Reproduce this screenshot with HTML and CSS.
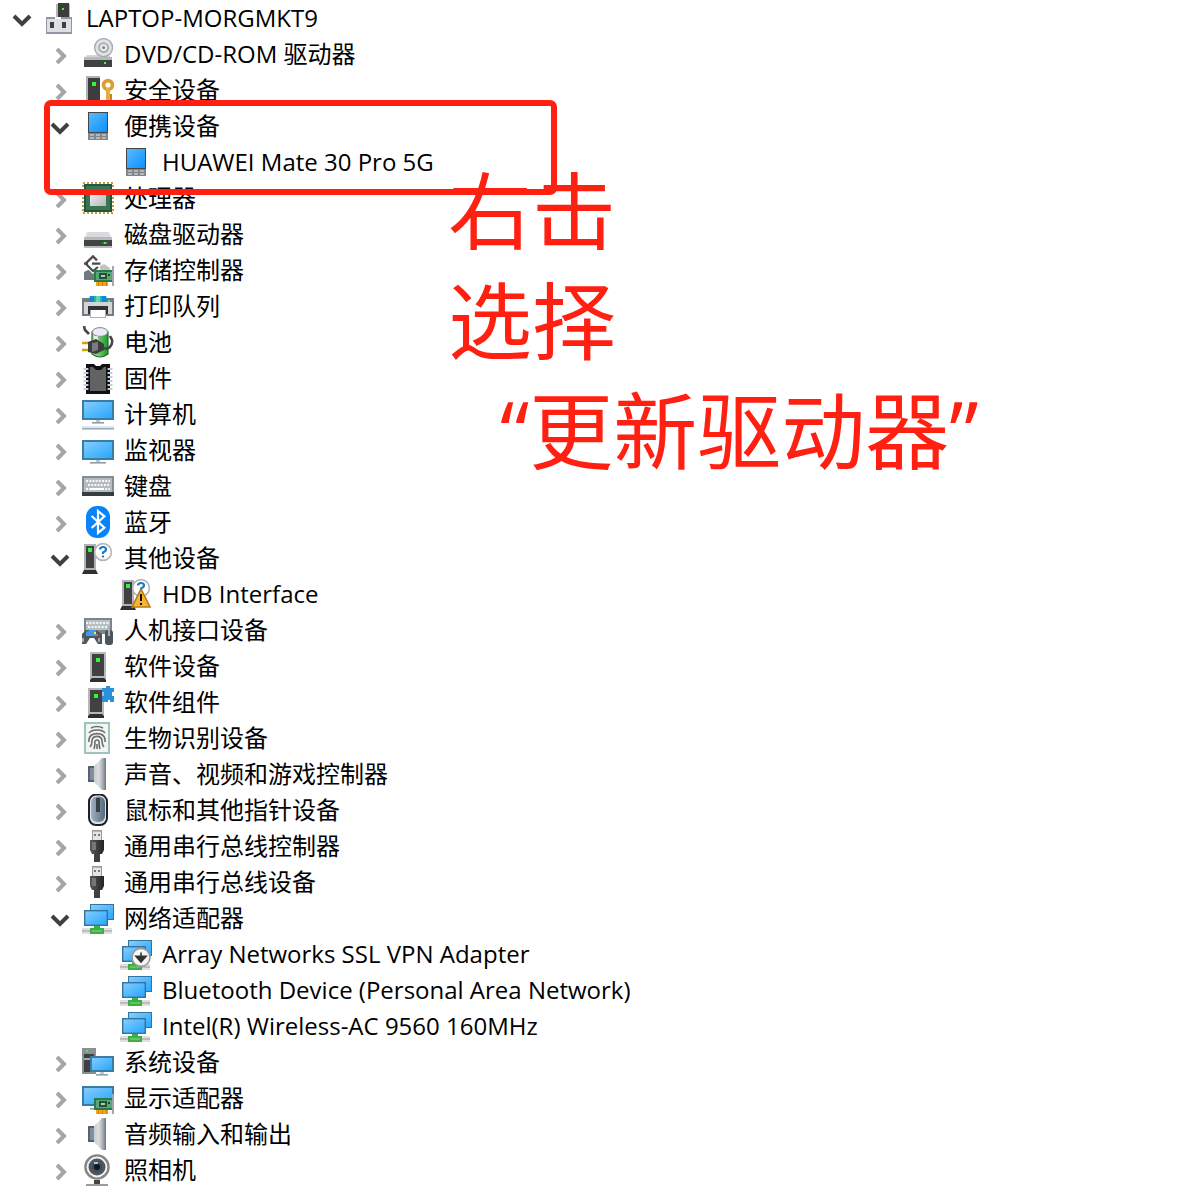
FILE: index.html
```html
<!DOCTYPE html>
<html lang="zh-CN">
<head>
<meta charset="utf-8">
<meta name="viewport" content="width=device-width, initial-scale=1">
<title>设备管理器</title>
<link rel="stylesheet" href="styles.css">
</head>
<body>
<svg class="defs" aria-hidden="true">
  <defs>
    <linearGradient id="screen" x1="0" y1="0" x2="1" y2="1"><stop offset="0" stop-color="#86ccfd"/><stop offset=".5" stop-color="#55bafd"/><stop offset="1" stop-color="#2aa6fb"/></linearGradient>
    <linearGradient id="phone" x1="0" y1="0" x2="1" y2="1"><stop offset="0" stop-color="#5bb9ff"/><stop offset="1" stop-color="#0b91fb"/></linearGradient>
    <linearGradient id="silver" x1="0" y1="0" x2="1" y2="1"><stop offset="0" stop-color="#f4f4f4"/><stop offset="1" stop-color="#b4b7ba"/></linearGradient>
    <linearGradient id="steel" x1="0" y1="0" x2="1" y2="0"><stop offset="0" stop-color="#9fb1c4"/><stop offset="1" stop-color="#57697c"/></linearGradient>
    <linearGradient id="cone" x1="0" y1="0" x2="1" y2="0"><stop offset="0" stop-color="#c9cdd0"/><stop offset=".4" stop-color="#dcdfe1"/><stop offset=".75" stop-color="#a4aab0"/><stop offset="1" stop-color="#69737e"/></linearGradient>
    <linearGradient id="dark" x1="0" y1="0" x2="1" y2="0"><stop offset="0" stop-color="#5a5a5a"/><stop offset="1" stop-color="#242424"/></linearGradient>
    <linearGradient id="green" x1="0" y1="0" x2="1" y2="0"><stop offset="0" stop-color="#b0eaa4"/><stop offset="1" stop-color="#189b25"/></linearGradient>
  </defs>
  <symbol id="right" viewBox="0 0 28 20"><path d="M11 3l7 7-7 7" fill="none" stroke="#a6a6a6" stroke-width="4"/></symbol>
  <symbol id="down" viewBox="0 0 28 20"><path d="M6 6l8 8 8-8" fill="none" stroke="#404040" stroke-width="4"/></symbol>

  <symbol id="root" viewBox="0 0 16 16">
    <path d="M6 1h7v7H6z" fill="#b4b6b9"/><path d="M7 .5h5.500V8H7z" fill="#3c3c3c"/><path d="M9 3h1v1H9z" fill="#2cff38"/>
    <path d="M1 7.500h13V16H1z" fill="#9197a2"/><path d="M1.500 8.500h12v6.500h-12z" fill="#dcdfe4"/><path d="M5.500 7.500h3v1h-3z" fill="#fff"/><path d="M3 10h2v3H3zM9 10h2v3H9z" fill="#3d3d42"/>
  </symbol>
  <symbol id="disc" viewBox="0 0 16 16">
    <path d="M2.500 8.500h11L15 11H1z" fill="#d3d5d8"/><circle cx="10.800" cy="4.800" r="4.500" fill="#dfe1e3" stroke="#a8acb1" stroke-width=".7"/><circle cx="10.800" cy="4.800" r="2.200" fill="#f1f1f1" stroke="#aaafb4"/><circle cx="10.800" cy="4.800" r=".8" fill="#84898e"/>
    <path d="M1 9.500h14v5H1z" fill="#b6b9bc"/><path d="M1 11h14v3.500H1z" fill="#414141"/><path d="M11 12h1v1h-1z" fill="#32ff3d"/>
  </symbol>
  <symbol id="key" viewBox="0 0 16 16">
    <path d="M2 1h7v13H2z" fill="#afb2b6"/><path d="M3 2h6v12H3z" fill="#3d3d3d"/><path d="M5 4h2v2H5z" fill="#2bfa35"/><path d="M2 14h8v2H2z" fill="#555"/>
    <circle cx="13" cy="5.500" r="2.200" fill="none" stroke="#dc9d30" stroke-width="1.800"/><path d="M12 7h2v8h-2z" fill="#e5ad40"/><path d="M14 10h1v3h-1z" fill="#c58622"/>
  </symbol>
  <symbol id="portable" viewBox="0 0 16 16">
    <path d="M3 1h10v14H3z" fill="#41464b"/><path d="M3.500 1.500h9V11h-9z" fill="url(#phone)"/><path d="M3 11.500h10V15H3z" fill="#81868b"/><path d="M4 12h2v1H4zM7 12h2v1H7zM10 12h2v1h-2zM4 13.500h2v1H4zM7 13.500h2v1H7zM10 13.500h2v1h-2z" fill="#b4b7ba"/>
  </symbol>
  <symbol id="cpu" viewBox="0 0 16 16">
    <rect x=".5" y=".5" width="15" height="15" fill="none" stroke="#c39c42" stroke-dasharray="1 1"/><path d="M1 1h14v14H1z" fill="#24563e"/><path d="M2 2h12v12H2z" fill="#357653"/><path d="M4 4h8v8H4z" fill="url(#silver)"/>
  </symbol>
  <symbol id="drive" viewBox="0 0 16 16">
    <path d="M2.500 7h11L15 11H1z" fill="#d8dadd"/><path d="M1 9.500h14V15H1z" fill="#b7babd"/><path d="M1 11h14v3H1z" fill="#404443"/><path d="M10 12h3v1h-3z" fill="#22892c"/><path d="M11 12h1v1h-1z" fill="#35ff40"/>
  </symbol>
  <symbol id="card" viewBox="0 0 16 16">
    <path d="M6 8h9v6H6z" fill="#287a49"/><path d="M7 9h8v4H7z" fill="#58a878"/><path d="M8.500 9.500h4v3h-4z" fill="#24513b"/><path d="M9.500 10.500h2v1h-2z" fill="#b9c6be"/><path d="M13 10h1v1h-1z" fill="#1e4b30"/><path d="M7 14h6v2H7z" fill="#f5a60b"/><path d="M8 14h.5v2H8zM10 14h.5v2H10zM12 14h.5v2H12z" fill="#d67f06"/><path d="M15 6h1v10h-1z" fill="#a4a7aa"/>
  </symbol>
  <symbol id="storage" viewBox="0 0 16 16">
    <path d="M1 9l2-1h5v5H1z" fill="#74797c"/><path d="M9 6l2-1 3 2v2H9z" fill="#c1c4c7"/>
    <path d="M7.500 3.200L5.500 1.200 1.800 4.800l3.700 3.700 2.500-2M5 4.800h4.200M1 4.800h2" fill="none" stroke="#fff" stroke-width="2.200"/><path d="M7.500 3.200L5.500 1.200 1.800 4.800l3.700 3.700 2.500-2M5 4.800h4.200M1 4.800h2" fill="none" stroke="#4b4b4b" stroke-width="1.100"/><use href="#card"/>
  </symbol>
  <symbol id="printer" viewBox="0 0 16 16">
    <path d="M3 4h10v4H3z" fill="#777c80"/><path d="M4 3h8l1 3H3z" fill="#1385db"/><path d="M6 3h4v3H6z" fill="#20b995"/><path d="M7 3h2v3H7z" fill="#62d6b4"/>
    <path d="M0 4h3l1 2h8l1-2h3v9H0z" fill="#747b82"/><path d="M1 6h14v6H1z" fill="#d2d5d8"/><path d="M13 5h1v1h-1z" fill="#40ef36"/><path d="M3 8h10v4H3z" fill="#333"/><path d="M4 10h8v4H4z" fill="#aeb0b1"/><path d="M4.500 10h7v3.500h-7z" fill="#fff"/>
  </symbol>
  <symbol id="battery" viewBox="0 0 16 16">
    <path d="M5 3q4-4 8 0v11q-4 3-8 0z" fill="url(#green)" stroke="#276a2c" stroke-width=".6"/><ellipse cx="9" cy="3" rx="3.800" ry="2.200" fill="#eceaf5" stroke="#8b8a9c" stroke-width=".5"/><path d="M6 5h2v5H6z" fill="#fff" opacity=".7"/>
    <path d="M0 8.500h4M0 12h4" stroke="#cfa10b" stroke-width="1.200"/><path d="M1 0l.5 2 2 2M11 11c2 1 4.500-1 4-4l-1-2" fill="none" stroke="#464646" stroke-width="1.300"/><path d="M3 8l4-1.500L11 9v3l-4 2-4-1z" fill="#3d3d3d"/><path d="M5 8.500l3-.5v4l-3 1z" fill="#7b7b7b"/>
  </symbol>
  <symbol id="chip" viewBox="0 0 16 16">
    <path d="M2 1h4l1 1h2l1-1h4v15H2z" fill="#111"/><path d="M4 2.500h1.500L7 4h2.500L11 2.500h1V14.500H4z" fill="#626262"/><path d="M2 3v12M14 3v12" stroke="#c3cddd" stroke-width="2.400" stroke-dasharray="1 1"/>
  </symbol>
  <symbol id="computer" viewBox="0 0 16 16">
    <path d="M0 1h16v10H0z" fill="#397ca4"/><path d="M1 2h14v8H1z" fill="url(#screen)"/><path d="M7 11h2v1H7z" fill="#b7c7d4"/><path d="M5 12h6v.8H5z" fill="#8c9dac"/><path d="M0 14h16v1H0z" fill="#dfe6ed"/><path d="M0 15h16v.8H0z" fill="#9daabd"/>
  </symbol>
  <symbol id="monitor" viewBox="0 0 16 16">
    <path d="M0 3h16v10H0z" fill="#397ca4"/><path d="M1 4h14v8H1z" fill="url(#screen)"/><path d="M7 13h2v1H7z" fill="#b7c7d4"/><path d="M4 14h8v.8H4z" fill="#8c9dac"/>
  </symbol>
  <symbol id="keyboard" viewBox="0 0 16 16">
    <path d="M0 3h16v10H0z" fill="#858c94"/><path d="M1 4h14v7H1z" fill="#b5bbc0"/><path d="M2 5.500h12M3 7.500h11M2 9.500h12" stroke="#f6f8fa" stroke-dasharray="1 .6"/><path d="M4 9h7v1H4z" fill="#fff"/><path d="M0 11h16v2H0z" fill="#353d44"/>
  </symbol>
  <symbol id="bluetooth" viewBox="0 0 16 16">
    <rect x="2" width="12" height="16" rx="5.500" fill="#0784fb"/><path d="M4.800 5l6.400 5.800L8 13.500v-11l3.200 2.700L4.800 11" fill="none" stroke="#fff" stroke-width="1.100"/>
  </symbol>
  <symbol id="unit" viewBox="0 0 16 16">
    <path d="M1 1h6v14H1z" fill="#b0b3b6"/><path d="M2 2h4v11H2z" fill="#414141"/><path d="M3 3h2v2H3z" fill="#36f43b"/><path d="M1 14h6l1 2H0z" fill="#303030"/>
  </symbol>
  <symbol id="unknown" viewBox="0 0 16 16">
    <use href="#unit"/><circle cx="10.500" cy="5" r="4.200" fill="#fff" stroke="#b5b5b5" stroke-width=".8"/><path d="M9 3.800q0-1.300 1.500-1.300T12 3.700q0 .8-1.500 1.500v.8M10.500 6.700v1" fill="none" stroke="#1f78c8" stroke-width="1.100"/>
  </symbol>
  <symbol id="warning" viewBox="0 0 16 16">
    <use href="#unknown"/><path d="M10.500 5.500L15 14.500H6z" fill="#f6b536" stroke="#b87b12" stroke-width=".8"/><path d="M10 8h1v3.500h-1zM10 12.500h1v1h-1z" fill="#111"/>
  </symbol>
  <symbol id="hid" viewBox="0 0 16 16">
    <path d="M1 2h14v8H1z" fill="#7c858d"/><path d="M2 3h12v5H2z" fill="#b8bfc5"/><path d="M2 4.500h12M3 6.500h11" stroke="#f4f6f8" stroke-dasharray="1 .7"/>
    <path d="M0 15V10l2-2h5l3 2v5H8l-2-3H4l-2 3z" fill="#4f565d"/><path d="M2 9l2-1h3v3H2z" fill="#3f9be4"/><path d="M6 9h1v1H6z" fill="#ffe257"/><path d="M7 10h1v1H7z" fill="#ee5d36"/><path d="M0 12h1v2H0zM8 12h1v2H8z" fill="#a3a8ad"/><rect x="11.500" y="8" width="4" height="7.500" rx="1.500" fill="#4b535b"/><path d="M13 6h1v5h-1z" fill="#aab2b8"/>
  </symbol>
  <symbol id="software" viewBox="0 0 16 16">
    <path d="M4 1h8v14H4z" fill="#b5b9bd"/><path d="M5 2h6v11H5z" fill="#414141"/><path d="M7 4h2v2H7z" fill="#2efb38"/><path d="M5 14h6l1 1v1H4v-1z" fill="#303030"/>
  </symbol>
  <symbol id="component" viewBox="0 0 16 16">
    <path d="M3 1h8v14H3z" fill="#b5b9bd"/><path d="M4 2h6v11H4z" fill="#414141"/><path d="M6 4h2v2H6z" fill="#2efb38"/><path d="M4 14h6l1 1v1H3v-1z" fill="#303030"/>
    <path d="M10 1h2V0h2v1h2v2h-1v2h1v3h-2V7h-1v1h-3V5h1V3h-1z" fill="#2b91db"/>
  </symbol>
  <symbol id="finger" viewBox="0 0 16 16">
    <path d="M1.500.5h12v15h-12z" fill="#f3f5f4" stroke="#9fc4ba"/><g fill="none" stroke="#6a6f70" stroke-width=".8"><path d="M4.500 3q3-1.500 6 0M3.500 5.500q1-1.500 4-1.500t4 1.500M3.500 10V8.500Q4 5.800 7.500 5.800t4 2.700V10M4 12.500q1-1 1-3.500.5-1.800 2.500-1.800T10 9q0 2.500 1 3.500M6 13.500q.5-1.500.5-4 1-1 2 0 0 2.500.5 4M7.500 11v2.500"/></g>
  </symbol>
  <symbol id="speaker" viewBox="0 0 16 16">
    <path d="M3 4h4v8H3z" fill="#536270"/><path d="M4 5h3v6H4z" fill="#82909d"/><path d="M6 4l4-4h2v16h-2l-4-4z" fill="url(#cone)"/>
  </symbol>
  <symbol id="mouse" viewBox="0 0 16 16">
    <rect x="3.500" y=".3" width="9" height="15.200" rx="3.500" fill="#dce4ea" stroke="#1d2025"/><rect x="4.500" y="1.300" width="7" height="12.700" rx="3" fill="url(#steel)"/><path d="M7 2h2v7H7z" fill="#3a3f45"/>
  </symbol>
  <symbol id="usb" viewBox="0 0 16 16">
    <path d="M5 0h5v5H5z" fill="#999"/><path d="M5.500.8h4V5h-4z" fill="#e5e5e5"/><path d="M6 2h1v1H6zM8 2h1v1H8z" fill="#777"/><path d="M4 5h7v5l-1 2H5l-1-2z" fill="url(#dark)"/><path d="M5 6h2v4H5z" fill="#777"/><path d="M6 12h3v4H6z" fill="#404040"/>
  </symbol>
  <symbol id="network" viewBox="0 0 16 16">
    <path d="M4 1h12v8H4z" fill="#33749e"/><path d="M4.500 1.500h11v7h-11z" fill="url(#screen)"/><path d="M1 4h12v8H1z" fill="#33749e"/><path d="M1.700 4.700h10.600v6.600H1.700z" fill="url(#screen)"/>
    <path d="M0 13h15v3H0z" fill="#e0e0e0"/><path d="M0 14h15v1H0z" fill="#bcbcbc"/><path d="M6 12h3v1h2v3H4v-3h2z" fill="#3fae45"/><path d="M5 14h5v1H5z" fill="#5cc85e"/>
  </symbol>
  <symbol id="vpn" viewBox="0 0 16 16">
    <use href="#network"/><circle cx="10.500" cy="9.700" r="4.500" fill="#f7f7f7" stroke="#979797" stroke-width=".8"/><path d="M10.500 7.200v4M8 9.200h5l-2.500 2.800z" fill="#333" stroke="#333" stroke-width=".8"/>
  </symbol>
  <symbol id="system" viewBox="0 0 16 16">
    <path d="M0 1h7v13H0z" fill="#8d9093"/><path d="M1 4h5v9H1z" fill="#3d3f41"/><path d="M2 2h1v1H2z" fill="#31ff3d"/><path d="M1 6h5v1H1z" fill="#a6a8aa"/>
    <path d="M4 5h12v8H4z" fill="#397ca4"/><path d="M5 6h10v6H5z" fill="url(#screen)"/><path d="M9 13h2v1H9z" fill="#bdcad4"/><path d="M7 14h6v.8H7z" fill="#8e9fae"/>
  </symbol>
  <symbol id="display" viewBox="0 0 16 16">
    <path d="M0 2h16v10H0z" fill="#397ca4"/><path d="M1 3h14v8H1z" fill="url(#screen)"/><path d="M4 13h4v.8H4z" fill="#8e9fae"/><use href="#card"/>
  </symbol>
  <symbol id="camera" viewBox="0 0 16 16">
    <circle cx="7.500" cy="6.500" r="5.800" fill="#f5f5f5" stroke="#858585" stroke-width="1.200"/><circle cx="7.500" cy="6.500" r="3.500" fill="#3e4e60" stroke="#555" stroke-width="1.500"/><circle cx="7.500" cy="6.500" r="1.500" fill="#0e1723"/><path d="M6 4h2v1H6z" fill="#a9c5db"/><path d="M6 13h3v2H6z" fill="#444"/><path d="M2 15h11v1H2z" fill="#9b9b9b"/>
  </symbol>
</svg>

<main class="manager">
  <ul class="tree">
    <li>
      <div class="row"><button class="toggle" aria-label="折叠" aria-expanded="true"><svg><use href="#down"/></svg></button><svg class="icon"><use href="#root"/></svg><span>LAPTOP-MORGMKT9</span></div>
      <ul>
        <li><div class="row"><button class="toggle" aria-label="展开"><svg><use href="#right"/></svg></button><svg class="icon"><use href="#disc"/></svg><span>DVD/CD-ROM 驱动器</span></div></li>
        <li><div class="row"><button class="toggle" aria-label="展开"><svg><use href="#right"/></svg></button><svg class="icon"><use href="#key"/></svg><span>安全设备</span></div></li>
        <li class="marked">
          <div class="row"><button class="toggle" aria-label="折叠" aria-expanded="true"><svg><use href="#down"/></svg></button><svg class="icon"><use href="#portable"/></svg><span>便携设备</span></div>
          <ul><li><div class="row leaf"><svg class="icon"><use href="#portable"/></svg><span>HUAWEI Mate 30 Pro 5G</span></div></li></ul>
          <p class="note">右击<br>选择<br><span class="step">“更新驱动器”</span></p>
        </li>
        <li><div class="row"><button class="toggle" aria-label="展开"><svg><use href="#right"/></svg></button><svg class="icon"><use href="#cpu"/></svg><span>处理器</span></div></li>
        <li><div class="row"><button class="toggle" aria-label="展开"><svg><use href="#right"/></svg></button><svg class="icon"><use href="#drive"/></svg><span>磁盘驱动器</span></div></li>
        <li><div class="row"><button class="toggle" aria-label="展开"><svg><use href="#right"/></svg></button><svg class="icon"><use href="#storage"/></svg><span>存储控制器</span></div></li>
        <li><div class="row"><button class="toggle" aria-label="展开"><svg><use href="#right"/></svg></button><svg class="icon"><use href="#printer"/></svg><span>打印队列</span></div></li>
        <li><div class="row"><button class="toggle" aria-label="展开"><svg><use href="#right"/></svg></button><svg class="icon"><use href="#battery"/></svg><span>电池</span></div></li>
        <li><div class="row"><button class="toggle" aria-label="展开"><svg><use href="#right"/></svg></button><svg class="icon"><use href="#chip"/></svg><span>固件</span></div></li>
        <li><div class="row"><button class="toggle" aria-label="展开"><svg><use href="#right"/></svg></button><svg class="icon"><use href="#computer"/></svg><span>计算机</span></div></li>
        <li><div class="row"><button class="toggle" aria-label="展开"><svg><use href="#right"/></svg></button><svg class="icon"><use href="#monitor"/></svg><span>监视器</span></div></li>
        <li><div class="row"><button class="toggle" aria-label="展开"><svg><use href="#right"/></svg></button><svg class="icon"><use href="#keyboard"/></svg><span>键盘</span></div></li>
        <li><div class="row"><button class="toggle" aria-label="展开"><svg><use href="#right"/></svg></button><svg class="icon"><use href="#bluetooth"/></svg><span>蓝牙</span></div></li>
        <li>
          <div class="row"><button class="toggle" aria-label="折叠" aria-expanded="true"><svg><use href="#down"/></svg></button><svg class="icon"><use href="#unknown"/></svg><span>其他设备</span></div>
          <ul><li><div class="row leaf"><svg class="icon"><use href="#warning"/></svg><span>HDB Interface</span></div></li></ul>
        </li>
        <li><div class="row"><button class="toggle" aria-label="展开"><svg><use href="#right"/></svg></button><svg class="icon"><use href="#hid"/></svg><span>人机接口设备</span></div></li>
        <li><div class="row"><button class="toggle" aria-label="展开"><svg><use href="#right"/></svg></button><svg class="icon"><use href="#software"/></svg><span>软件设备</span></div></li>
        <li><div class="row"><button class="toggle" aria-label="展开"><svg><use href="#right"/></svg></button><svg class="icon"><use href="#component"/></svg><span>软件组件</span></div></li>
        <li><div class="row"><button class="toggle" aria-label="展开"><svg><use href="#right"/></svg></button><svg class="icon"><use href="#finger"/></svg><span>生物识别设备</span></div></li>
        <li><div class="row"><button class="toggle" aria-label="展开"><svg><use href="#right"/></svg></button><svg class="icon"><use href="#speaker"/></svg><span>声音、视频和游戏控制器</span></div></li>
        <li><div class="row"><button class="toggle" aria-label="展开"><svg><use href="#right"/></svg></button><svg class="icon"><use href="#mouse"/></svg><span>鼠标和其他指针设备</span></div></li>
        <li><div class="row"><button class="toggle" aria-label="展开"><svg><use href="#right"/></svg></button><svg class="icon"><use href="#usb"/></svg><span>通用串行总线控制器</span></div></li>
        <li><div class="row"><button class="toggle" aria-label="展开"><svg><use href="#right"/></svg></button><svg class="icon"><use href="#usb"/></svg><span>通用串行总线设备</span></div></li>
        <li>
          <div class="row"><button class="toggle" aria-label="折叠" aria-expanded="true"><svg><use href="#down"/></svg></button><svg class="icon"><use href="#network"/></svg><span>网络适配器</span></div>
          <ul>
            <li><div class="row leaf"><svg class="icon"><use href="#vpn"/></svg><span>Array Networks SSL VPN Adapter</span></div></li>
            <li><div class="row leaf"><svg class="icon"><use href="#network"/></svg><span>Bluetooth Device (Personal Area Network)</span></div></li>
            <li><div class="row leaf"><svg class="icon"><use href="#network"/></svg><span>Intel(R) Wireless-AC 9560 160MHz</span></div></li>
          </ul>
        </li>
        <li><div class="row"><button class="toggle" aria-label="展开"><svg><use href="#right"/></svg></button><svg class="icon"><use href="#system"/></svg><span>系统设备</span></div></li>
        <li><div class="row"><button class="toggle" aria-label="展开"><svg><use href="#right"/></svg></button><svg class="icon"><use href="#display"/></svg><span>显示适配器</span></div></li>
        <li><div class="row"><button class="toggle" aria-label="展开"><svg><use href="#right"/></svg></button><svg class="icon"><use href="#speaker"/></svg><span>音频输入和输出</span></div></li>
        <li><div class="row"><button class="toggle" aria-label="展开"><svg><use href="#right"/></svg></button><svg class="icon"><use href="#camera"/></svg><span>照相机</span></div></li>
      </ul>
    </li>
  </ul>
</main>
</body>
</html>
```
FILE: styles.css
```css
*,
*::after {
  box-sizing: border-box;
}

body {
  margin: 0;
  background: #fff;
  color: #000;
  font-family: "Open Sans", "Noto Sans CJK SC", sans-serif;
  font-size: 24px;
  line-height: 36px;
}

.defs {
  position: absolute;
  width: 0;
  height: 0;
}

.manager {
  padding: 0 8px 8px;
}

ul {
  margin: 0;
  padding: 0;
  list-style: none;
}

ul ul {
  padding-left: 38px;
}

.row {
  display: flex;
  align-items: center;
  height: 36px;
  white-space: nowrap;
}

.leaf {
  padding-left: 36px;
}

.toggle {
  width: 28px;
  height: 20px;
  margin: 4px 8px 0 0;
  padding: 0;
  border: 0;
  background: none;
}

.toggle svg {
  display: block;
  width: 28px;
  height: 20px;
}

.icon {
  flex: none;
  width: 32px;
  height: 32px;
  margin-right: 10px;
}

.marked {
  position: relative;
}

/* Red frame drawn over the group that needs attention */
.marked::after {
  content: "";
  position: absolute;
  top: -8px;
  bottom: -15px;
  left: -2px;
  width: 513px;
  border: 6px solid #ff2012;
  border-radius: 7px;
  pointer-events: none;
}

.note {
  position: absolute;
  z-index: 1;
  top: 48px;
  left: 402px;
  margin: 0;
  color: #ff2012;
  font-size: 84px;
  line-height: 110px;
  white-space: nowrap;
}

.step {
  padding-left: 52px;
}
```
